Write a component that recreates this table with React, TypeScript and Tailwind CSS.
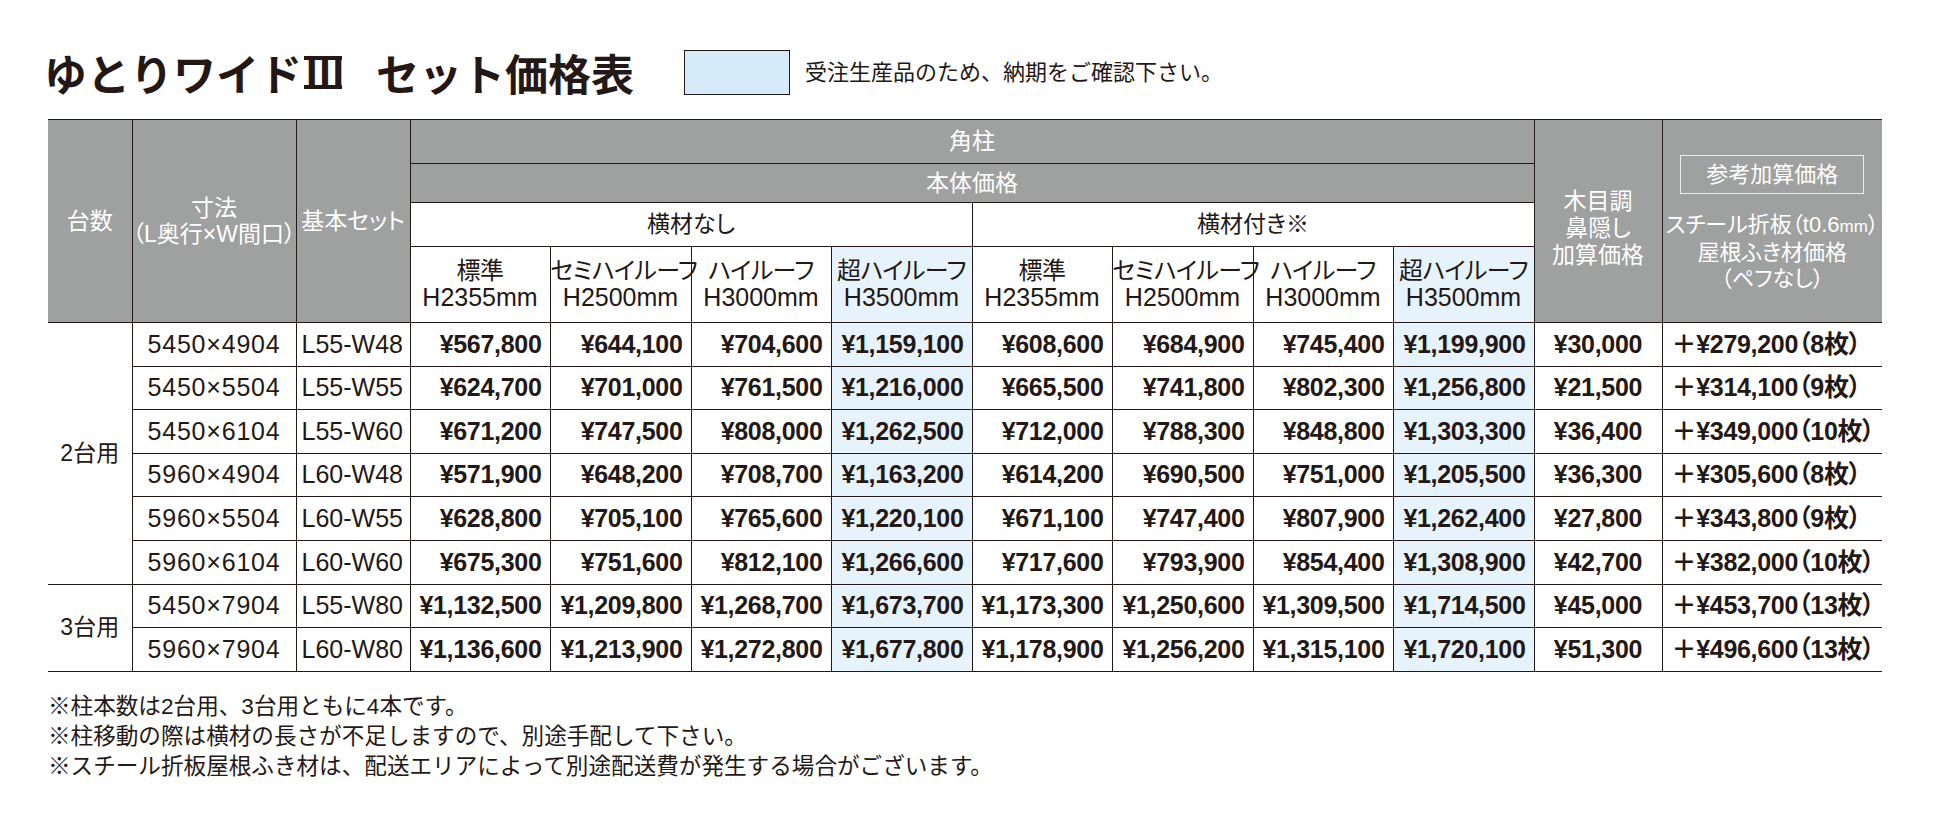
import React from 'react';

type Row = {
  dim: string;
  set: string;
  prices: string[];
  wood: string;
  roof: string;
  sheets: string;
};

const groups: { label: string; rows: Row[] }[] = [
  {
    label: '2台用',
    rows: [
      { dim: '5450×4904', set: 'L55-W48', prices: ['¥567,800', '¥644,100', '¥704,600', '¥1,159,100', '¥608,600', '¥684,900', '¥745,400', '¥1,199,900'], wood: '¥30,000', roof: '¥279,200', sheets: '8' },
      { dim: '5450×5504', set: 'L55-W55', prices: ['¥624,700', '¥701,000', '¥761,500', '¥1,216,000', '¥665,500', '¥741,800', '¥802,300', '¥1,256,800'], wood: '¥21,500', roof: '¥314,100', sheets: '9' },
      { dim: '5450×6104', set: 'L55-W60', prices: ['¥671,200', '¥747,500', '¥808,000', '¥1,262,500', '¥712,000', '¥788,300', '¥848,800', '¥1,303,300'], wood: '¥36,400', roof: '¥349,000', sheets: '10' },
      { dim: '5960×4904', set: 'L60-W48', prices: ['¥571,900', '¥648,200', '¥708,700', '¥1,163,200', '¥614,200', '¥690,500', '¥751,000', '¥1,205,500'], wood: '¥36,300', roof: '¥305,600', sheets: '8' },
      { dim: '5960×5504', set: 'L60-W55', prices: ['¥628,800', '¥705,100', '¥765,600', '¥1,220,100', '¥671,100', '¥747,400', '¥807,900', '¥1,262,400'], wood: '¥27,800', roof: '¥343,800', sheets: '9' },
      { dim: '5960×6104', set: 'L60-W60', prices: ['¥675,300', '¥751,600', '¥812,100', '¥1,266,600', '¥717,600', '¥793,900', '¥854,400', '¥1,308,900'], wood: '¥42,700', roof: '¥382,000', sheets: '10' },
    ],
  },
  {
    label: '3台用',
    rows: [
      { dim: '5450×7904', set: 'L55-W80', prices: ['¥1,132,500', '¥1,209,800', '¥1,268,700', '¥1,673,700', '¥1,173,300', '¥1,250,600', '¥1,309,500', '¥1,714,500'], wood: '¥45,000', roof: '¥453,700', sheets: '13' },
      { dim: '5960×7904', set: 'L60-W80', prices: ['¥1,136,600', '¥1,213,900', '¥1,272,800', '¥1,677,800', '¥1,178,900', '¥1,256,200', '¥1,315,100', '¥1,720,100'], wood: '¥51,300', roof: '¥496,600', sheets: '13' },
    ],
  },
];

const heights = [
  { name: '標準', h: 'H2355mm' },
  { name: 'セミハイルーフ', h: 'H2500mm' },
  { name: 'ハイルーフ', h: 'H3000mm' },
  { name: '超ハイルーフ', h: 'H3500mm' },
];

const notes = [
  '※柱本数は2台用、3台用ともに4本です。',
  '※柱移動の際は横材の長さが不足しますので、別途手配して下さい。',
  '※スチール折板屋根ふき材は、配送エリアによって別途配送費が発生する場合がございます。',
];

export default function App() {
  return (
    <div className="w-[1942px] h-[818px] bg-white pl-[48px] pt-[50px] text-[#231815] font-['Liberation_Sans','Noto_Sans_CJK_JP',sans-serif]">
      {/* title + legend */}
      <div className="flex items-center h-[45px]">
        <h1 className="w-[640px] -ml-[4px] flex items-center text-[43px] leading-none font-bold font-['Noto_Sans_CJK_JP',sans-serif]">
          <span>ゆとりワイド</span>
          <span className="inline-flex items-center h-[33px] ml-[2px] px-[1px] border-y-[4px] border-[#231815] text-[40px] leading-[25px] tracking-[-4px]">
            Ⅲ
          </span>
          <span className="ml-[34px]">セット価格表</span>
        </h1>
        <div className="w-[106px] h-[45px] bg-[#d5ebf9] border border-[#231815]" />
        <p className="ml-[15px] text-[22px]">受注生産品のため、納期をご確認下さい。</p>
      </div>

      <table className="mt-[24px] w-[1834px] table-fixed border-collapse border-t border-[#231815] [font-feature-settings:'palt']">
        <colgroup>
          <col className="w-[84px]" />
          <col className="w-[164px]" />
          <col className="w-[114px]" />
          <col className="w-[140px]" />
          <col className="w-[141px]" />
          <col className="w-[140px]" />
          <col className="w-[141px]" />
          <col className="w-[140px]" />
          <col className="w-[141px]" />
          <col className="w-[140px]" />
          <col className="w-[141px]" />
          <col className="w-[128px]" />
          <col className="w-[220px]" />
        </colgroup>
        <thead>
          <tr className="h-[44px]">
            <th rowSpan={4} className="bg-[#9fa0a0] text-white font-normal text-[23px] border-r border-b border-[#231815]">
              台数
            </th>
            <th rowSpan={4} className="bg-[#9fa0a0] text-white font-normal text-[23px] leading-[26px] border-r border-b border-[#231815]">
              寸法
              <br />
              （L奥行×W間口）
            </th>
            <th rowSpan={4} className="bg-[#9fa0a0] text-white font-normal text-[23px] border-r border-b border-[#231815]">
              基本セット
            </th>
            <th colSpan={8} className="bg-[#9fa0a0] text-white font-normal text-[23px] border-r border-b border-[#231815]">
              角柱
            </th>
            <th rowSpan={4} className="bg-[#9fa0a0] text-white font-normal text-[23px] leading-[27px] pt-[14px] border-r border-b border-[#231815]">
              木目調
              <br />
              鼻隠し
              <br />
              加算価格
            </th>
            <th rowSpan={4} className="bg-[#9fa0a0] text-white font-normal text-[22px] leading-[26px] pt-[5px] border-b border-[#231815]">
              <div className="flex flex-col items-center">
                <div className="w-[184px] h-[39px] border border-[#ececec] flex items-center justify-center">
                  参考加算価格
                </div>
                <div className="mt-[18px]">
                  スチール折板（t0.6<span className="text-[17px]">mm</span>）
                </div>
                <div>屋根ふき材価格</div>
                <div>（ペフなし）</div>
              </div>
            </th>
          </tr>
          <tr className="h-[39px]">
            <th colSpan={8} className="bg-[#9fa0a0] text-white font-normal text-[23px] border-r border-b border-[#231815]">
              本体価格
            </th>
          </tr>
          <tr className="h-[44px]">
            <th colSpan={4} className="font-normal text-[23px] border-r border-b border-[#231815]">
              横材なし
            </th>
            <th colSpan={4} className="font-normal text-[23px] border-r border-b border-[#231815]">
              横材付き※
            </th>
          </tr>
          <tr className="h-[76px]">
            {[...heights, ...heights].map((c, i) => (
              <th
                key={i}
                className={`font-normal text-[24px] leading-[26px] tracking-[-0.6px] whitespace-nowrap border-r border-b border-[#231815] ${
                  i % 4 === 3 ? 'bg-[#e6f3fc]' : ''
                }`}
              >
                {c.name}
                <br />
                <span className="text-[25px] tracking-normal">{c.h}</span>
              </th>
            ))}
          </tr>
        </thead>
        <tbody>
          {groups.map((g) =>
            g.rows.map((r, ri) => (
              <tr key={r.dim} className="h-[43.6px]">
                {ri === 0 && (
                  <td rowSpan={g.rows.length} className="text-center text-[23px] border-r border-b border-[#231815]">
                    {g.label}
                  </td>
                )}
                <td className="text-center text-[25px] tracking-[0.8px] border-r border-b border-[#231815]">{r.dim}</td>
                <td className="pl-[5px] text-[25px] border-r border-b border-[#231815]">{r.set}</td>
                {r.prices.map((p, pi) => (
                  <td
                    key={pi}
                    className={`text-right pr-[8px] text-[25px] font-bold tracking-[-0.3px] border-r border-b border-[#231815] ${
                      pi % 4 === 3 ? 'bg-[#e6f3fc]' : ''
                    }`}
                  >
                    {p}
                  </td>
                ))}
                <td className="text-center text-[25px] font-bold tracking-[-0.3px] border-r border-b border-[#231815]">{r.wood}</td>
                <td className="pl-[9px] text-[25px] font-bold tracking-[-0.3px] whitespace-nowrap border-b border-[#231815]">
                  ＋{r.roof}（{r.sheets}枚）
                </td>
              </tr>
            ))
          )}
        </tbody>
      </table>

      <div className="mt-[20px] text-[22.6px] leading-[30px]">
        {notes.map((n) => (
          <p key={n}>{n}</p>
        ))}
      </div>
    </div>
  );
}
